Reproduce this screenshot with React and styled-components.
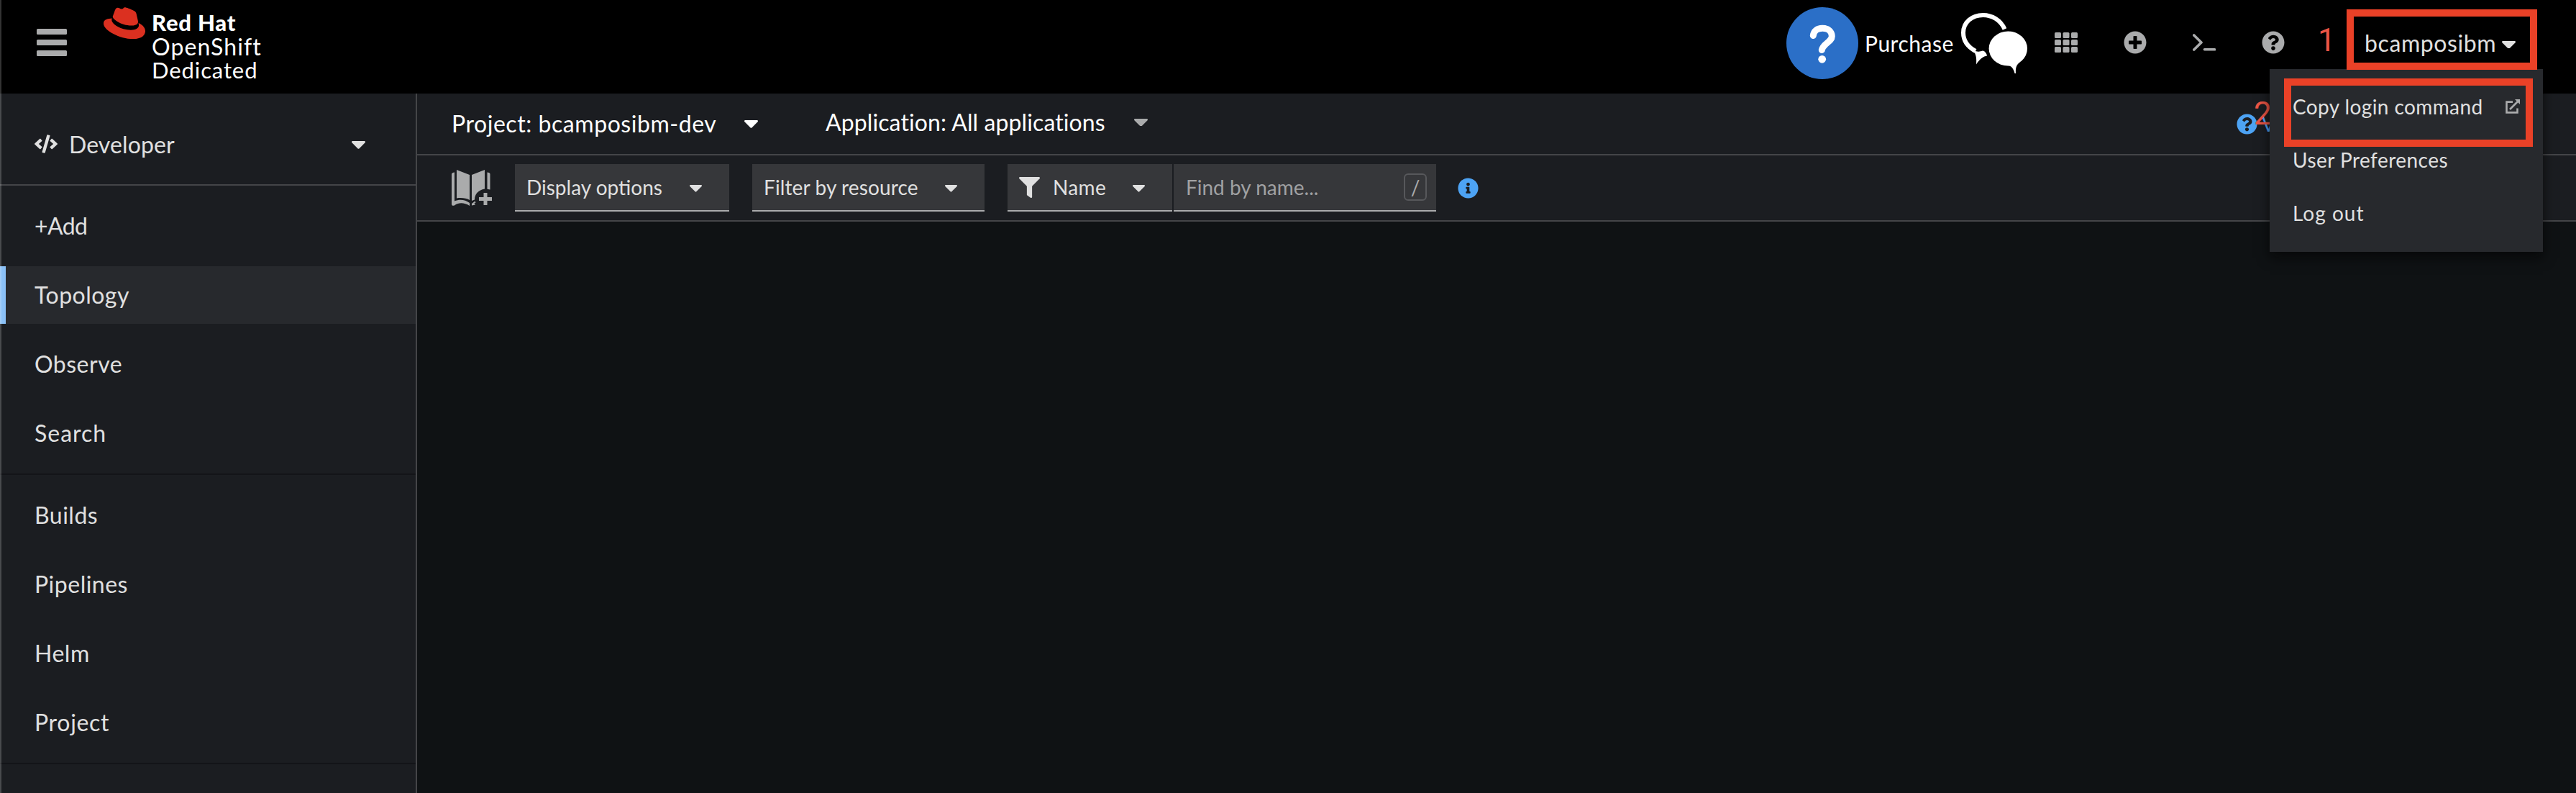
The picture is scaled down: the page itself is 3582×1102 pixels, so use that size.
import React from "react";
import styled, { createGlobalStyle } from "styled-components";
import {
  FaRedhat,
  FaCode,
  FaFilter,
  FaInfoCircle,
  FaQuestionCircle,
  FaPlusCircle,
} from "react-icons/fa";

const color = {
  black: "#000000",
  panel: "#1b1d21",
  canvas: "#0f1214",
  raised: "#27292d",
  control: "#36373a",
  line: "#444548",
  text: "#e0e0e0",
  muted: "#aaabac",
  white: "#ffffff",
  link: "#4da3f4",
  callout: "#ea4127",
};

const GlobalStyle = createGlobalStyle`
  * { box-sizing: border-box; }
  body {
    margin: 0;
    background: ${color.canvas};
    color: ${color.text};
    font-family: Lato, "Open Sans", sans-serif;
    font-size: 32px;
  }
  svg { display: block; flex: none; }
`;

const Page = styled.div`
  position: relative;
  display: flex;
  flex-direction: column;
  height: 1102px;
  overflow: hidden;
`;

const WindowEdge = styled.div`
  position: absolute;
  inset: 0 auto 0 0;
  width: 2px;
  background: rgba(255, 255, 255, 0.2);
`;

const Label = styled.span`
  letter-spacing: ${(p) => p.$track || 0}px;
  white-space: pre;
`;

/* Masthead */

const Masthead = styled.header`
  display: flex;
  align-items: center;
  flex: none;
  height: 130px;
  padding: 0 84px 12px 51px;
  background: ${color.black};
`;

const Burger = styled.div`
  display: flex;
  flex-direction: column;
  gap: 7.4px;
  width: 42px;
`;

const BurgerBar = styled.i`
  height: 7.6px;
  border-radius: 1.5px;
  background: ${color.muted};
`;

const Brand = styled.div`
  display: flex;
  align-self: flex-start;
  gap: 9px;
  margin-left: 51px;
`;

const Hat = styled(FaRedhat)`
  width: 58px;
  height: 46px;
  margin-top: 9px;
  color: #db3020;
`;

const BrandLines = styled.div`
  display: flex;
  flex-direction: column;
  padding-top: 15px;
  color: ${color.white};
`;

const BrandLine = styled(Label)`
  font-size: ${(p) => p.$size}px;
  font-weight: ${(p) => p.$weight || 400};
  line-height: 33px;
`;

const Tools = styled.div`
  display: flex;
  align-items: center;
  margin-left: auto;
`;

const Purchase = styled(Label)`
  width: 134px;
  margin: 1px 0 0 9px;
  color: ${color.white};
  font-size: 30px;
`;

const IconRow = styled.div`
  display: flex;
  align-items: center;
  gap: 64px;
  margin-left: 38px;
  color: ${color.muted};
`;

const HelpBadge = styled.svg`
  width: 100px;
  height: 100px;
  margin-top: 2px;
`;

const ChatSvg = styled.svg`
  width: 92px;
  height: 84px;
  margin-top: 2px;
`;

const UserToggle = styled.div`
  display: flex;
  align-items: center;
  justify-content: space-between;
  width: 210px;
  margin-left: 111px;
`;

/* User menu */

const UserMenu = styled.div`
  position: absolute;
  top: 96px;
  right: 46px;
  width: 380px;
  padding: 15px 0 17px;
  background: ${color.raised};
  box-shadow: 0 8px 16px rgba(3, 3, 3, 0.64);
`;

const MenuItem = styled.div`
  display: flex;
  align-items: center;
  justify-content: space-between;
  height: 74px;
  padding: 0 32px;
  font-size: 28px;
`;

/* Body */

const Body = styled.div`
  display: flex;
  flex: 1;
  min-height: 0;
`;

const Sidebar = styled.nav`
  width: 580px;
  flex: none;
  border-right: 2px solid ${color.line};
  background: ${color.panel};
  overflow: hidden;
`;

const Perspective = styled.div`
  display: flex;
  align-items: center;
  height: 128px;
  padding: 14px 70px 0 48px;
  border-bottom: 2px solid ${color.line};
`;

const PerspectiveLabel = styled(Label)`
  flex: 1;
  margin-left: 16px;
`;

const NavGroup = styled.div`
  display: flex;
  flex-direction: column;
  gap: 16px;
  padding: 16px 0;
  border-bottom: 2px solid #131418;
`;

const NavItem = styled.div`
  display: flex;
  align-items: center;
  height: 80px;
  padding: 0 0 2px 40px;
  border-left: 8px solid ${(p) => (p.$active ? "#8bc1f7" : "transparent")};
  background: ${(p) => (p.$active ? color.raised : "transparent")};
`;

const Main = styled.main`
  display: flex;
  flex-direction: column;
  flex: 1;
`;

const ContextBar = styled.div`
  display: flex;
  align-items: center;
  height: 86px;
  padding-left: 48px;
  border-bottom: 2px solid ${color.line};
  background: ${color.panel};
  color: ${color.white};
`;

const ContextSelect = styled.div`
  display: flex;
  align-items: center;
  justify-content: space-between;
  width: ${(p) => p.$width}px;
  margin-right: 94px;
  padding-bottom: ${(p) => p.$lift}px;
`;

const Shortcuts = styled.div`
  display: flex;
  align-items: center;
  gap: 6px;
  width: 472px;
  margin-left: auto;
  color: ${color.link};
  font-size: 28px;
`;

const Toolbar = styled.div`
  display: flex;
  align-items: center;
  height: 92px;
  padding-left: 48px;
  border-bottom: 2px solid ${color.line};
  background: ${color.panel};
`;

const Control = styled.div`
  display: flex;
  align-items: center;
  justify-content: space-between;
  width: ${(p) => p.$width}px;
  height: 66px;
  margin-left: ${(p) => p.$gap ?? 32}px;
  padding: 0 ${(p) => p.$end ?? 38}px 0 16px;
  border-bottom: 2px solid ${color.muted};
  background: ${color.control};
  font-size: 28px;
`;

const FilterLabel = styled(Label)`
  flex: 1;
  margin-left: 18px;
`;

const Placeholder = styled(Label)`
  margin-left: 1px;
  color: #a0a1a3;
`;

const KeyHint = styled.kbd`
  display: flex;
  align-items: center;
  justify-content: center;
  width: 32px;
  height: 38px;
  border: 2px solid #57585b;
  border-radius: 6px;
  color: ${color.muted};
  font: 28px Lato, sans-serif;
`;

const InfoIcon = styled(FaInfoCircle)`
  width: 29px;
  height: 29px;
  margin-left: 30px;
  color: ${color.link};
`;

/* Walkthrough callouts */

const CalloutBox = styled.div`
  position: absolute;
  top: ${(p) => p.$top}px;
  left: ${(p) => p.$left}px;
  width: ${(p) => p.$width}px;
  height: ${(p) => p.$height}px;
  border: 10px solid ${color.callout};
`;

const CalloutNumber = styled.span`
  position: absolute;
  top: ${(p) => p.$top}px;
  left: ${(p) => p.$left}px;
  color: #ec5545;
  font: 400 44px/50px Roboto, sans-serif;
`;

/* Icons */

const CaretSvg = styled.svg`
  width: ${(p) => p.$size || 19}px;
  height: ${(p) => (p.$size || 19) * 0.57}px;
  margin-top: ${(p) => p.$drop || 0}px;
  color: ${(p) => p.$tone || "inherit"};
`;

const Caret = (props) => (
  <CaretSvg viewBox="11 192 298 169" preserveAspectRatio="none" fill="currentColor" {...props}>
    <path d="M31.3 192h257.3c17.8 0 26.7 21.5 14.1 34.1L174.1 354.8c-7.8 7.8-20.5 7.8-28.3 0L17.2 226.1C4.6 213.5 13.5 192 31.3 192z" />
  </CaretSvg>
);

const QuestionBadge = () => (
  <HelpBadge viewBox="0 0 100 100">
    <circle cx="50" cy="50" r="50" fill="#2b6fc7" />
    <path
      d="M37.3 39.5C38 33 43 29.3 50 29.3c8 0 13.3 4.5 13.3 11.2C63.3 48 50.5 51 49.3 59.5"
      fill="none"
      stroke="#fff"
      strokeWidth="9"
      strokeLinecap="round"
    />
    <circle cx="49.7" cy="72.3" r="5.4" fill="#fff" />
  </HelpBadge>
);

const ChatIcon = () => (
  <ChatSvg viewBox="0 0 92 84">
    <path
      d="M60.5 22.5C55 10 43 3 30.5 3C15 3 3 13 3 27.5C3 38 9 47 20 53"
      fill="none"
      stroke="#fff"
      strokeWidth="6"
    />
    <path d="M16 50.5C20 54 25 54.5 30 52.5C33 53 35.500 56 36 59.5C31 60.5 26.5 63 21 71.5C21.5 64 21.5 58 16 50.5z" fill="#fff" />
    <ellipse cx="65.3" cy="49.5" rx="26.7" ry="24" fill="#fff" />
    <path d="M62 72C69 73 72.5 76 74.5 84H76C75.5 76 77 72 82 68z" fill="#fff" />
  </ChatSvg>
);

const GridIcon = () => (
  <svg width="32" height="28" viewBox="0 0 32 28" fill="currentColor">
    {[0, 10, 20].map((y) =>
      [0, 11.5, 23].map((x) => <rect key={`${x}-${y}`} x={x} y={y} width="9" height="8" rx="1.5" />)
    )}
  </svg>
);

const TerminalIcon = () => (
  <svg width="32" height="24" viewBox="0 0 32 24" fill="none" stroke="currentColor" strokeLinecap="round">
    <path d="M1.8 2L12 12L1.8 22" strokeWidth="3.6" strokeLinejoin="round" />
    <path d="M16.5 21.8H30.5" strokeWidth="3.6" />
  </svg>
);

const ExternalIcon = () => (
  <svg width="20" height="20" viewBox="0 0 20 20" fill="none" stroke={color.muted} strokeWidth="2.6">
    <path d="M10 3.6H1.5V18.4H16.5V12.5" />
    <path d="M6 14L17 3" />
    <path d="M13 0H20V7z" fill={color.muted} stroke="none" />
  </svg>
);

const CatalogIcon = () => (
  <svg width="56" height="50" viewBox="0 0 56 50" fill={color.muted}>
    <path d="M7 0L25 7V42C20 39 13 38.5 7 39.5z" />
    <path d="M28 7L46 0V26.5C37 28 32 34 32 41.5L28 43z" />
    <path d="M0 6C0 4.5 2 3.5 4 3.5V43.5C11 40.5 19 41.5 25 46V50C18 45.5 10 45 4.5 49C2.5 50.5 0 50 0 47.5z" />
    <path d="M49.5 3.5C52 3.5 53.5 4.5 53.5 6V27.5L49.5 26.7z" />
    <path d="M28 49.5V47L32.5 43.5L33.5 45.5L31.5 46.5L33 48.5z" />
    <path d="M44.5 32H49.5V38H56V43H49.5V49H44.5V43H38V38H44.5z" />
  </svg>
);

const NAV_GROUPS = [
  [
    { name: "+Add", track: -0.6 },
    { name: "Topology", track: 0.5, active: true },
    { name: "Observe", track: 0.5 },
    { name: "Search", track: 1 },
  ],
  [
    { name: "Builds", track: 0.5 },
    { name: "Pipelines", track: 0.5 },
    { name: "Helm", track: 0.5 },
    { name: "Project", track: 0.7 },
  ],
];

export default function App() {
  return (
    <Page>
      <GlobalStyle />
      <Masthead>
        <Burger>
          <BurgerBar />
          <BurgerBar />
          <BurgerBar />
        </Burger>
        <Brand>
          <Hat viewBox="0 52 512 406" preserveAspectRatio="none" />
          <BrandLines>
            <BrandLine $size={31} $weight={900} $track={0.8}>Red Hat</BrandLine>
            <BrandLine $size={32} $track={1.1}>OpenShift</BrandLine>
            <BrandLine $size={31} $track={0.9}>Dedicated</BrandLine>
          </BrandLines>
        </Brand>
        <Tools>
          <QuestionBadge />
          <Purchase $track={0.5}>Purchase</Purchase>
          <ChatIcon />
          <IconRow>
            <GridIcon />
            <FaPlusCircle size={32} />
            <TerminalIcon />
            <FaQuestionCircle size={32} />
          </IconRow>
          <UserToggle>
            <Label $track={0.6}>bcamposibm</Label>
            <Caret $drop={6} />
          </UserToggle>
        </Tools>
      </Masthead>

      <Body>
        <Sidebar>
          <Perspective>
            <FaCode size={32} />
            <PerspectiveLabel $track={0.1}>Developer</PerspectiveLabel>
            <Caret $drop={3} />
          </Perspective>
          {NAV_GROUPS.map((group, i) => (
            <NavGroup key={i}>
              {group.map((item) => (
                <NavItem key={item.name} $active={item.active}>
                  <Label $track={item.track}>{item.name}</Label>
                </NavItem>
              ))}
            </NavGroup>
          ))}
        </Sidebar>

        <Main>
          <ContextBar>
            <ContextSelect $width={426} $lift={2}>
              <Label $track={0.55}>Project: bcamposibm-dev</Label>
              <Caret $drop={3} />
            </ContextSelect>
            <ContextSelect $width={448} $lift={6}>
              <Label $track={0.1}>Application: All applications</Label>
              <Caret $drop={2} $tone={color.muted} />
            </ContextSelect>
            <Shortcuts>
              <FaQuestionCircle size={29} />
              <Label>V</Label>
            </Shortcuts>
          </ContextBar>
          <Toolbar>
            <CatalogIcon />
            <Control $width={298}>
              <Label>Display options</Label>
              <Caret $size={17} $drop={4} />
            </Control>
            <Control $width={323}>
              <Label $track={0.12}>Filter by resource</Label>
              <Caret $size={17} $drop={4} />
            </Control>
            <Control $width={229}>
              <FaFilter size={29} />
              <FilterLabel $track={0.35}>Name</FilterLabel>
              <Caret $size={17} $drop={4} />
            </Control>
            <Control $width={365} $gap={2} $end={13}>
              <Placeholder>Find by name...</Placeholder>
              <KeyHint>/</KeyHint>
            </Control>
            <InfoIcon />
          </Toolbar>
        </Main>
      </Body>

      <CalloutNumber $top={31} $left={3223}>1</CalloutNumber>
      <CalloutNumber $top={133} $left={3134}>2</CalloutNumber>
      <UserMenu>
        <MenuItem>
          <Label $track={0.4}>Copy login command</Label>
          <ExternalIcon />
        </MenuItem>
        <MenuItem>
          <Label $track={0.46}>User Preferences</Label>
        </MenuItem>
        <MenuItem>
          <Label $track={1}>Log out</Label>
        </MenuItem>
      </UserMenu>
      <CalloutBox $top={13} $left={3263} $width={265} $height={84} />
      <CalloutBox $top={109} $left={3176} $width={346} $height={95} />
      <WindowEdge />
    </Page>
  );
}
